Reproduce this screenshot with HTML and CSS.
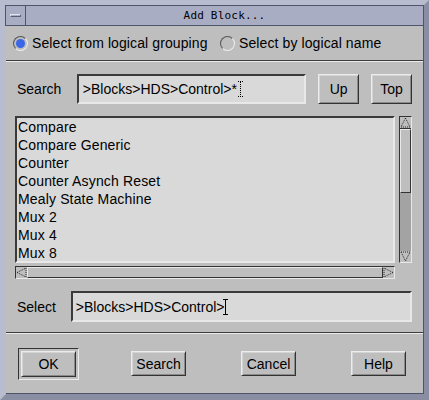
FILE: index.html
```html
<!DOCTYPE html>
<html>
<head>
<meta charset="utf-8">
<link rel="stylesheet" href="styles.css">
</head>
<body>
<div class="frame">
  <div class="titlebar">
    <div class="menubtn"><span class="dash"></span></div>
    <div class="title">Add Block...</div>
  </div>
  <div class="dialog">
    <div class="radios">
      <label class="radio first"><span class="dot on"></span>Select from logical grouping</label>
      <label class="radio"><span class="dot"></span>Select by logical name</label>
    </div>
    <div class="section">
      <div class="row search">
        <span class="lbl">Search</span>
        <div class="field sfield">&gt;Blocks&gt;HDS&gt;Control&gt;*<span class="ibeam dotted"></span></div>
        <div class="btn small">Up</div>
        <div class="btn small">Top</div>
      </div>
      <div class="listarea">
        <div class="listrow">
          <div class="list">
            <div class="item">Compare</div>
            <div class="item">Compare Generic</div>
            <div class="item">Counter</div>
            <div class="item">Counter Asynch Reset</div>
            <div class="item">Mealy State Machine</div>
            <div class="item">Mux 2</div>
            <div class="item">Mux 4</div>
            <div class="item">Mux 8</div>
          </div>
          <div class="vscroll">
            <div class="arrow up"><svg width="11" height="11" viewBox="0 0 11 11"><path d="M5.5 1 L1 10 L10 10 Z" fill="none" stroke="#222" stroke-width="1" stroke-dasharray="1 1"/></svg></div>
            <div class="vthumb"></div>
            <div class="vrest"></div>
            <div class="arrow down"><svg width="11" height="11" viewBox="0 0 11 11"><path d="M1 1 L10 1 L5.5 10 Z" fill="none" stroke="#222" stroke-width="1" stroke-dasharray="1 1"/></svg></div>
          </div>
        </div>
        <div class="hscroll">
          <div class="harrow"><svg width="11" height="11" viewBox="0 0 11 11"><path d="M1 5.5 L10 1 L10 10 Z" fill="none" stroke="#222" stroke-width="1" stroke-dasharray="1 1"/></svg></div>
          <div class="hthumb"></div>
          <div class="harrow"><svg width="11" height="11" viewBox="0 0 11 11"><path d="M10 5.5 L1 1 L1 10 Z" fill="none" stroke="#222" stroke-width="1" stroke-dasharray="1 1"/></svg></div>
        </div>
      </div>
      <div class="row select">
        <span class="lbl">Select</span>
        <div class="field selfield">&gt;Blocks&gt;HDS&gt;Control&gt;<span class="ibeam tight"></span></div>
      </div>
    </div>
    <div class="buttons">
      <div class="default"><div class="btn wide">OK</div></div>
      <div class="btn">Search</div>
      <div class="btn">Cancel</div>
      <div class="btn help">Help</div>
    </div>
  </div>
</div>
</body>
</html>
```

FILE: styles.css
```css
html, body {
  margin: 0;
  padding: 0;
  background: #bebebe;
}
.frame {
  width: 429px;
  height: 400px;
  box-sizing: border-box;
  background: #b2b6ca;
  border-right: 5px solid #8a8ea2;
  border-bottom: 6px solid #8a8ea2;
  border-top: 5px solid #b8bccf;
  border-left: 6px solid #b8bccf;
  display: flex;
  flex-direction: column;
  font-family: "Liberation Sans", Arial, sans-serif;
  font-size: 14px;
  color: #000;
}
.titlebar {
  flex: none;
  display: flex;
  background: #a9adc4;
  border: 1px solid #50546a;
  margin-left: -1px;
  box-sizing: border-box;
  height: 21px;
}
.menubtn {
  width: 19px;
  flex: none;
  border-right: 1px solid #50546a;
  display: flex;
  align-items: center;
  justify-content: center;
}
.dash {
  width: 11px;
  height: 3px;
  border-top: 1px solid #e0e2ee;
  border-left: 1px solid #e0e2ee;
  border-right: 1px solid #5a5e72;
  border-bottom: 1px solid #5a5e72;
  box-sizing: border-box;
}
.title {
  flex: 1;
  text-align: center;
  font-family: "DejaVu Sans Mono", "Liberation Mono", monospace;
  font-size: 11px;
  line-height: 19px;
  letter-spacing: 0.2px;
}
.dialog {
  flex: 1;
  background: #bebebe;
  border-right: 1px solid #50546a;
  border-bottom: 1px solid #50546a;
  display: flex;
  flex-direction: column;
}
.radios {
  height: 35px;
  flex: none;
  box-sizing: border-box;
  display: flex;
  align-items: center;
  padding-left: 7px;
  border-bottom: 1px solid #3c3c3c;
  box-shadow: 0 1px 0 #ececec;
}
.radio {
  display: flex;
  align-items: center;
  gap: 4px;
  letter-spacing: 0.1px;
}
.radio.first {
  width: 207px;
}
.dot {
  width: 15px;
  height: 15px;
  box-sizing: border-box;
  border-radius: 50%;
  border: 1px solid;
  border-color: #555 #eee #eee #555;
  position: relative;
}
.dot.on::after {
  content: "";
  position: absolute;
  left: 2px;
  top: 2px;
  width: 9px;
  height: 9px;
  border-radius: 50%;
  background: #3a66e8;
}
.section {
  flex: none;
  padding: 12px 11px 10px 9px;
  border-bottom: 1px solid #3c3c3c;
  box-shadow: 0 1px 0 #ececec;
  margin-top: 1px;
  display: flex;
  flex-direction: column;
}
.row {
  display: flex;
  align-items: center;
}
.lbl {
  padding-left: 2px;
}
.search .lbl {
  width: 60px;
}
.select .lbl {
  width: 54px;
}
.field {
  background: #d9d9d9;
  box-sizing: border-box;
  border: 2px solid;
  border-color: #3a3a3a #e8e8e8 #e8e8e8 #3a3a3a;
  padding-left: 4px;
  display: flex;
  align-items: center;
  white-space: nowrap;
}
.sfield {
  width: 230px;
  height: 30px;
}
.selfield {
  width: 342px;
  height: 31px;
  padding-left: 3px;
}
.ibeam {
  display: inline-block;
  width: 5px;
  height: 16px;
  box-sizing: border-box;
  border-top: 1px solid #000;
  border-bottom: 1px solid #000;
  background: linear-gradient(#000, #000) center / 1px 100% no-repeat;
  margin-left: 1px;
}
.ibeam.tight {
  margin-left: -2px;
}
.ibeam.dotted {
  border-top-style: dotted;
  border-bottom-style: dotted;
  background: repeating-linear-gradient(#000 0 1px, transparent 1px 2px) center / 1px 100% no-repeat;
}
.btn {
  box-sizing: border-box;
  border: 1px solid;
  border-color: #ececec #333 #333 #ececec;
  box-shadow: inset 1px 1px 0 #d4d4d4, inset -1px -1px 0 #8a8a8a;
  display: flex;
  align-items: center;
  justify-content: center;
  background: #bebebe;
  height: 25px;
  width: 55px;
}
.btn.small {
  width: 41px;
  height: 30px;
  margin-left: 12px;
}
.listarea {
  margin-top: 12px;
  display: flex;
  flex-direction: column;
}
.listrow {
  display: flex;
  gap: 4px;
}
.list {
  width: 380px;
  height: 147px;
  box-sizing: border-box;
  background: #d9d9d9;
  border: 2px solid;
  border-color: #3a3a3a #e8e8e8 #e8e8e8 #3a3a3a;
  padding-left: 1px;
  overflow: hidden;
  letter-spacing: 0.15px;
}
.item {
  line-height: 18px;
  height: 18px;
}
.vscroll {
  width: 13px;
  height: 147px;
  box-sizing: border-box;
  background: #a3a3a3;
  border: 1px solid;
  border-color: #333 #e8e8e8 #e8e8e8 #333;
  display: flex;
  flex-direction: column;
}
.arrow, .harrow {
  flex: none;
  width: 11px;
  height: 11px;
  display: flex;
  align-items: center;
  justify-content: center;
  background: #bebebe;
}
.arrow.up {
  border-bottom: 1px solid #333;
}
.vthumb {
  height: 64px;
  flex: none;
  background: #bebebe;
  box-sizing: border-box;
  border: 1px solid;
  border-color: #e8e8e8 #333 #333 #e8e8e8;
}
.vrest {
  flex: 1;
}
.hscroll {
  margin-top: 3px;
  width: 380px;
  height: 13px;
  box-sizing: border-box;
  background: #a3a3a3;
  border: 1px solid;
  border-color: #333 #e8e8e8 #e8e8e8 #333;
  display: flex;
}
.hthumb {
  flex: 1;
  background: #bebebe;
  box-sizing: border-box;
  border: 1px solid;
  border-color: #e8e8e8 #333 #333 #e8e8e8;
}
.select {
  margin-top: 12px;
}
.buttons {
  flex: 1;
  margin-top: 1px;
  display: flex;
  align-items: center;
  padding-left: 12px;
}
.default {
  box-sizing: border-box;
  border: 1px solid;
  border-color: #333 #ececec #ececec #333;
  padding: 2px;
  margin-right: 52px;
}
.btn.wide {
  width: 55px;
  height: 26px;
}
.buttons .btn {
  margin-right: 55px;
}
.buttons .btn.help {
  margin-right: 0;
}
.default .btn {
  margin-right: 0;
}
```
